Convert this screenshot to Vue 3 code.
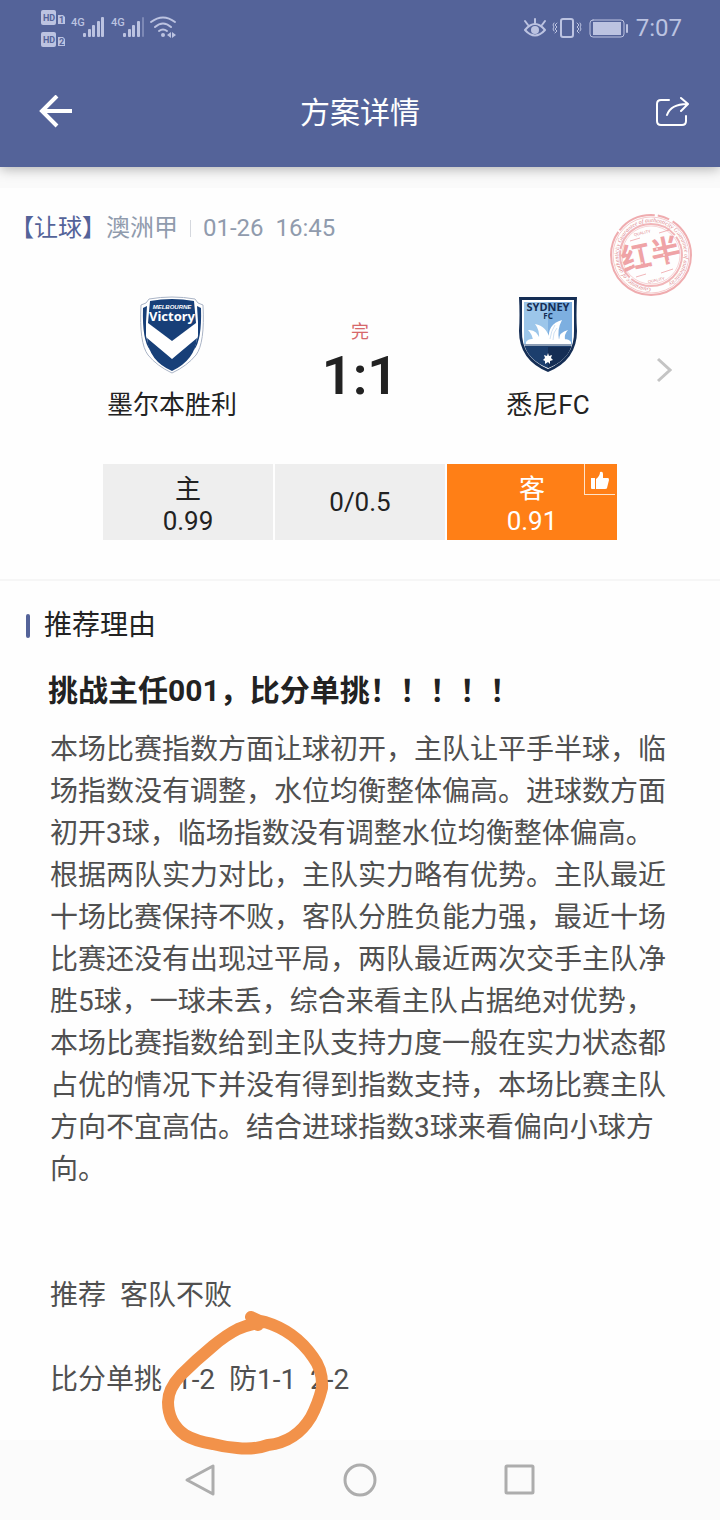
<template>
	<div class="page">
		<header class="header">
			<div class="status">
				<svg class="status-left" viewBox="0 0 140 44" width="140" height="44" aria-hidden="true">
					<g fill="#bcc3e1">
						<rect x="1" y="2" width="15" height="15" rx="2" />
						<rect x="1" y="24" width="15" height="15" rx="2" />
						<path d="M18 7h5l2 2v7h-7zM18 29h5l2 2v7h-7z" />
						<rect x="43" y="25" width="3" height="4" rx="1" />
						<rect x="48" y="21" width="3" height="8" rx="1" />
						<rect x="52" y="17" width="3" height="12" rx="1" />
						<rect x="57" y="13" width="3" height="16" rx="1" />
						<rect x="61" y="9" width="3" height="20" rx="1" />
						<rect x="83" y="25" width="3" height="4" rx="1" />
						<rect x="88" y="21" width="3" height="8" rx="1" />
						<rect x="92" y="17" width="3" height="12" rx="1" />
						<rect x="97" y="13" width="3" height="16" rx="1" />
						<rect x="102" y="9" width="2" height="20" rx="1" opacity=".4" />
						<circle cx="123" cy="27" r="2" />
						<path d="M131 24v6l-4-3zM132 24l4 3-4 3z" />
					</g>
					<g fill="none" stroke="#bcc3e1" stroke-width="2" stroke-linecap="round">
						<path d="M111 14q12-9 24 0M115 19q8-7 16 0M119 23q4-3 8 0" />
					</g>
					<g class="hd">
						<text x="3" y="13">HD</text>
						<text x="3" y="35">HD</text>
						<text x="19" y="15">1</text>
						<text x="19" y="37">2</text>
					</g>
					<g class="net">
						<text x="31" y="18">4G</text>
						<text x="71" y="18">4G</text>
					</g>
				</svg>
				<div class="status-right">
					<svg viewBox="0 0 108 24" width="108" height="24" aria-hidden="true">
						<g fill="none" stroke="#bcc3e1" stroke-width="2" stroke-linecap="round" stroke-linejoin="round">
							<path d="M3 14q10-12 20 0q-10 11-20 0zM13 7V3M6 9L3 5M20 9l3-4" />
							<rect x="39" y="3" width="12" height="18" rx="2" />
							<path d="M35 7l-2 2 2 2-2 2 2 2-2 2M32 7l-1 2 1 2-1 2 1 2M55 7l2 2-2 2 2 2-2 2 2 2M58 7l1 2-1 2 1 2-1 2" stroke-width="1" />
							<rect x="68" y="4" width="34" height="17" rx="3" stroke-width="1" />
							<path d="M105 9v7" />
						</g>
						<circle cx="13" cy="14" r="4" fill="#bcc3e1" />
						<rect x="71" y="6" width="28" height="13" fill="#bcc3e1" />
					</svg>
					<time class="clock">7:07</time>
				</div>
			</div>
			<div class="navbar">
				<button class="icon-btn" aria-label="返回">
					<svg viewBox="0 0 34 34" width="34" height="34">
						<path d="M33 16H4M18 1L3 16l15 15" fill="none" stroke="#fff" stroke-width="4" />
					</svg>
				</button>
				<h1>方案详情</h1>
				<button class="icon-btn" aria-label="分享">
					<svg viewBox="0 0 34 34" width="34" height="34">
						<g fill="none" stroke="#fff" stroke-width="2" stroke-linecap="round" stroke-linejoin="round">
							<path d="M14 5H6q-4 0-4 4v17q0 4 4 4h21q4 0 4-4v-5" />
							<path d="M12 20Q16 9 32 9M26 3l7 6-7 7" />
						</g>
					</svg>
				</button>
			</div>
		</header>

		<main>
			<section class="match">
				<div class="league">
					<span class="play">【让球】</span>
					<span>澳洲甲</span>
					<i class="sep"></i>
					<span class="date">{{ kickoff }}</span>
				</div>

				<!-- result stamp -->
				<svg class="stamp" viewBox="0 0 84 84" width="84" height="84">
					<defs>
						<path id="ring" d="M42 75a33 33 0 1 1 1 0" />
					</defs>
					<g fill="none" stroke="#eb979b">
						<circle cx="42" cy="42" r="40" stroke-width="2" stroke-dasharray="150 2 40 3 12 4" opacity=".8" />
						<circle cx="42" cy="42" r="38" stroke-width="1" opacity=".5" />
						<circle cx="42" cy="42" r="31" stroke-width="2" stroke-dasharray="70 2 30 1" opacity=".7" />
						<circle cx="42" cy="42" r="29" stroke-width="1" opacity=".4" />
						<path d="M21 28l10-3M50 20l10-3M27 64l10-3M52 60l12-4" stroke-width="1" opacity=".7" />
					</g>
					<text class="ring-text">
						<textPath href="#ring">Guarantee of authenticity Guarantee of authenticity Guarantee of authenticity</textPath>
					</text>
					<g transform="rotate(-12 42 42)">
						<text class="stamp-text" x="42" y="52">红半</text>
						<text class="stamp-small" x="38" y="20">QUALITY</text>
						<text class="stamp-small" x="42" y="69">QUALITY</text>
					</g>
					<g fill="#fff" opacity=".7">
						<circle v-for="(dot, i) in dots" :key="i" :cx="dot[0]" :cy="dot[1]" r="1" />
					</g>
				</svg>

				<div class="teams">
					<div class="team">
						<svg viewBox="0 0 64 78" width="64" height="78" role="img" aria-label="墨尔本胜利">
							<path d="M9 3Q32-1 55 3q2 5 8 6 2 38-7 50-9 11-24 18Q17 70 8 59-1 47 1 9q6-1 8-6z" fill="#fff" stroke="#aab4c6" />
							<path d="M7 10Q5 11 3 12q-1 32 7 42L6 40V26zM57 10q2 1 4 2 1 32-7 42l4-14V26z" fill="#173f78" />
							<path d="M10 5q22-4 44 0l2 22-24 18L8 27z" fill="#173f78" />
							<path d="M7 42l25 21 25-21q-2 22-25 33Q9 65 7 42z" fill="#173f78" />
							<text class="mv" x="32" y="13">
								<tspan>MELBOURNE</tspan>
								<tspan class="mv-big" x="32" y="25">Victory</tspan>
							</text>
						</svg>
						<span>墨尔本胜利</span>
					</div>
					<div class="result">
						<span class="state">完</span>
						<strong class="score">1:1</strong>
					</div>
					<div class="team">
						<svg viewBox="0 0 64 78" width="64" height="78" role="img" aria-label="悉尼FC">
							<path d="M3 1h58q-1 19 0 34 0 29-29 41Q3 64 3 35 4 20 3 1z" fill="#152e55" />
							<path d="M6 4h52v31q1 26-26 38Q5 61 6 35z" fill="#fff" />
							<path d="M8 6h24v42H8z" fill="#9cc6ea" />
							<path d="M32 6h24v42H32z" fill="#7dafe0" />
							<path d="M8 48h48q-4 16-24 24Q12 64 8 48z" fill="#1c3e6d" />
							<path d="M32 51h23q-5 14-23 21z" fill="#152e55" />
							<path
								d="M17 44Q16 38 12 34q9-1 12 10zM23 44q1-10-4-16 12 2 15 16zM33 44q-2-16 13-20-5 9-3 20zM43 44q0-8 9-10-4 4-3 10zM10 46q2-3 6-3h32q5 0 7 3v2H10z"
								fill="#fff"
							/>
							<path d="M34 43q1-8 5-14M37 44q0-8 4-12" stroke="#cfe1f3" fill="none" />
							<path d="M8 49h48" stroke="#fff" stroke-width="1" />
							<path d="M32 57l1 3 3-1-1 3 2 2-3 1v3l-2-2-3 2v-3l-2-1 2-2-1-3 3 1z" fill="#fff" />
							<text class="syd" x="32" y="15">
								<tspan>SYDNEY</tspan>
								<tspan class="syd-fc" x="32" y="23">FC</tspan>
							</text>
						</svg>
						<span>悉尼FC</span>
					</div>
					<button class="more" aria-label="比赛详情">
						<svg viewBox="0 0 16 28" width="16" height="28">
							<path d="M2 3l12 11L2 25" fill="none" stroke="#c4c4c4" stroke-width="3" />
						</svg>
					</button>
				</div>

				<div class="odds">
					<div v-for="odd in odds" :key="odd.value" class="odd" :class="{ active: odd.picked }">
						<span v-if="odd.name" class="side">{{ odd.name }}</span>
						<span>{{ odd.value }}</span>
						<i v-if="odd.picked" class="thumb">
							<svg viewBox="0 0 20 20" width="20" height="20">
								<path d="M1 8h4v11H2q-1 0-1-1zM6 9q4-3 4-7 3-1 3 2v4h5q1 0 1 2l-2 8q0 1-2 1H6z" fill="#fff" />
							</svg>
						</i>
					</div>
				</div>
			</section>

			<section class="reason">
				<h2>推荐理由</h2>
				<h3>挑战主任001，比分单挑！！！！！</h3>
				<article>
					<p>{{ analysis }}</p>
					<p class="pick">{{ pick }}</p>
					<p class="guess">
						<span>{{ guess }}</span>
						<svg class="scribble" viewBox="0 0 180 150" width="180" height="150" aria-hidden="true">
							<path
								d="M101 14Q108 18 115 19Q145 28 163 54Q173 67 172 85Q168 101 161 114Q146 139 118 142Q104 147 87 145Q74 144 63 141Q45 138 35 132Q18 120 18 99Q18 86 31 72Q46 57 63 43Q76 32 88 26Q102 20 115 19M101 14L108 22"
								fill="none"
								stroke="#f2924a"
								stroke-width="12"
								stroke-linecap="round"
								stroke-linejoin="round"
							/>
						</svg>
					</p>
				</article>
			</section>
		</main>

		<nav class="sysbar">
			<button aria-label="后退">
				<svg viewBox="0 0 36 36" width="36" height="36"><path d="M31 4v28L5 18z" /></svg>
			</button>
			<button aria-label="主屏幕">
				<svg viewBox="0 0 36 36" width="36" height="36"><circle cx="18" cy="18" r="15" /></svg>
			</button>
			<button aria-label="最近任务">
				<svg viewBox="0 0 36 36" width="36" height="36"><rect x="4" y="4" width="27" height="27" rx="1" /></svg>
			</button>
		</nav>
	</div>
</template>

<script setup>
	const kickoff = '01-26  16:45';

	const odds = [
		{ name: '主', value: '0.99' },
		{ value: '0/0.5' },
		{ name: '客', value: '0.91', picked: true },
	];

	// worn spots in the stamp ink
	const dots = [
		[18, 40], [22, 52], [27, 44], [33, 50], [36, 38], [30, 36], [48, 36], [55, 42], [62, 36],
		[52, 48], [66, 44], [58, 30], [70, 20], [75, 26], [66, 14], [78, 34], [72, 30], [12, 60],
		[44, 46], [24, 38], [40, 54], [60, 48], [8, 34], [50, 76],
	];

	const analysis =
		'本场比赛指数方面让球初开，主队让平手半球，临场指数没有调整，水位均衡整体偏高。进球数方面初开3球，临场指数没有调整水位均衡整体偏高。根据两队实力对比，主队实力略有优势。主队最近十场比赛保持不败，客队分胜负能力强，最近十场比赛还没有出现过平局，两队最近两次交手主队净胜5球，一球未丢，综合来看主队占据绝对优势，本场比赛指数给到主队支持力度一般在实力状态都占优的情况下并没有得到指数支持，本场比赛主队方向不宜高估。结合进球指数3球来看偏向小球方向。';
	const pick = '推荐  客队不败';
	const guess = '比分单挑  1-2  防1-1  2-2';
</script>

<style>
	body {
		margin: 0;
		background: #fefefe;
	}
</style>

<style scoped>
	.page {
		display: flex;
		flex-direction: column;
		min-height: 100vh;
		font-family: Roboto, "Noto Sans CJK SC", sans-serif;
		color: #222;
	}

	h1,
	h2,
	h3,
	p {
		margin: 0;
		font-weight: 400;
	}

	button {
		padding: 0;
		border: none;
		background: none;
		cursor: pointer;
	}

	svg {
		display: block;
	}

	/* header */
	.header {
		position: relative;
		background: #546399;
		box-shadow: 0 2px 12px rgba(0, 0, 0, 0.3);
	}

	.status {
		display: flex;
		justify-content: space-between;
		align-items: center;
		height: 56px;
		padding: 0 38px 0 40px;
	}

	.status-left {
		padding-top: 4px;
	}

	.status-right {
		display: flex;
		align-items: center;
		gap: 6px;
	}

	.clock {
		color: #bcc3e1;
		font-size: 24px;
		line-height: 28px;
	}

	.hd {
		font: 700 9px Roboto, sans-serif;
		fill: #546399;
	}

	.net {
		font: 500 11px Roboto, sans-serif;
		fill: #bcc3e1;
	}

	.navbar {
		display: flex;
		justify-content: space-between;
		align-items: center;
		height: 111px;
		padding: 0 31px;
	}

	.navbar h1 {
		padding-top: 3px;
		color: #fff;
		font-size: 30px;
		line-height: 44px;
	}

	.icon-btn {
		display: flex;
		justify-content: flex-end;
		width: 42px;
	}

	/* match */
	main {
		display: flow-root;
		background: linear-gradient(#fafafa 21px, #fefefe 21px);
	}

	.match {
		position: relative;
		padding-top: 20px;
		margin-top: 21px;
		border-bottom: 2px solid #f6f6f6;
	}

	.league {
		display: flex;
		align-items: center;
		padding-left: 10px;
		color: #909bad;
		font-size: 24px;
		line-height: 40px;
	}

	.play {
		color: #546399;
	}

	.sep {
		width: 1px;
		height: 17px;
		margin: 0 12px;
		background: #d5d8de;
	}

	.date {
		white-space: pre;
	}

	.stamp {
		position: absolute;
		top: 25px;
		right: 27px;
	}

	.ring-text {
		font: italic 6px "Liberation Serif", serif;
		fill: #e0868b;
	}

	.stamp-text {
		font: 700 30px "Noto Sans CJK SC", sans-serif;
		fill: #efa3a6;
		text-anchor: middle;
	}

	.stamp-small {
		font: 4px "Liberation Sans", sans-serif;
		fill: #e0868b;
		text-anchor: middle;
	}

	.teams {
		display: grid;
		grid-template-columns: 78px 1fr 1fr 1fr 78px;
		margin-top: 48px;
	}

	.team,
	.result {
		display: flex;
		flex-direction: column;
		align-items: center;
	}

	.team:first-child {
		grid-column: 2;
	}

	.team {
		gap: 11px;
		font-size: 26px;
		line-height: 40px;
	}

	.result {
		padding-top: 24px;
	}

	.state {
		color: #d6686b;
		font-size: 18px;
		line-height: 24px;
	}

	.score {
		font-size: 54px;
		font-weight: 600;
		line-height: 64px;
	}

	.more {
		display: flex;
		align-items: center;
		padding-top: 18px;
		padding-left: 14px;
	}

	.mv {
		font: italic 700 6px "Liberation Sans", sans-serif;
		fill: #fff;
		text-anchor: middle;
	}

	.mv-big {
		font: 700 13px "Noto Sans", sans-serif;
	}

	.syd {
		font: 700 11px "Noto Sans", sans-serif;
		fill: #152e55;
		text-anchor: middle;
	}

	.syd-fc {
		font-size: 8px;
	}

	.odds {
		display: flex;
		gap: 2px;
		margin: 39px 103px;
	}

	.odd {
		position: relative;
		flex: 1;
		display: flex;
		flex-direction: column;
		justify-content: center;
		align-items: center;
		height: 76px;
		background: #eee;
		font-size: 26px;
		line-height: 32px;
	}

	.odd.active {
		background: #ff7f16;
		color: #fff;
	}

	.side {
		padding-top: 6px;
	}

	.thumb {
		position: absolute;
		top: 0;
		right: 2px;
		padding: 6px 5px 4px;
		border-left: 1px solid #ffe3c8;
		border-bottom: 1px solid #ffe3c8;
	}

	/* reason */
	.reason {
		padding: 25px 26px 39px;
	}

	.reason h2 {
		display: flex;
		align-items: center;
		gap: 14px;
		font-size: 28px;
		line-height: 40px;
	}

	.reason h2::before {
		content: "";
		width: 4px;
		height: 24px;
		border-radius: 2px;
		background: #546399;
	}

	.reason h3 {
		margin: 24px 22px 0;
		font-size: 30px;
		font-weight: 700;
		line-height: 42px;
	}

	article {
		margin: 17px 24px 0;
		color: #505050;
		font-size: 28px;
		line-height: 42px;
		white-space: pre-wrap;
	}

	.pick {
		margin-top: 84px;
	}

	.guess {
		position: relative;
		display: flex;
		margin-top: 42px;
	}

	.scribble {
		position: absolute;
		top: -56px;
		left: 100px;
		z-index: 1;
		overflow: visible;
		pointer-events: none;
	}

	/* system bar */
	.sysbar {
		display: flex;
		justify-content: center;
		align-items: center;
		gap: 124px;
		height: 80px;
		margin-top: auto;
		background: #fbfbfb;
	}

	.sysbar svg {
		fill: none;
		stroke: #adadad;
		stroke-width: 3;
		stroke-linejoin: round;
	}
</style>
